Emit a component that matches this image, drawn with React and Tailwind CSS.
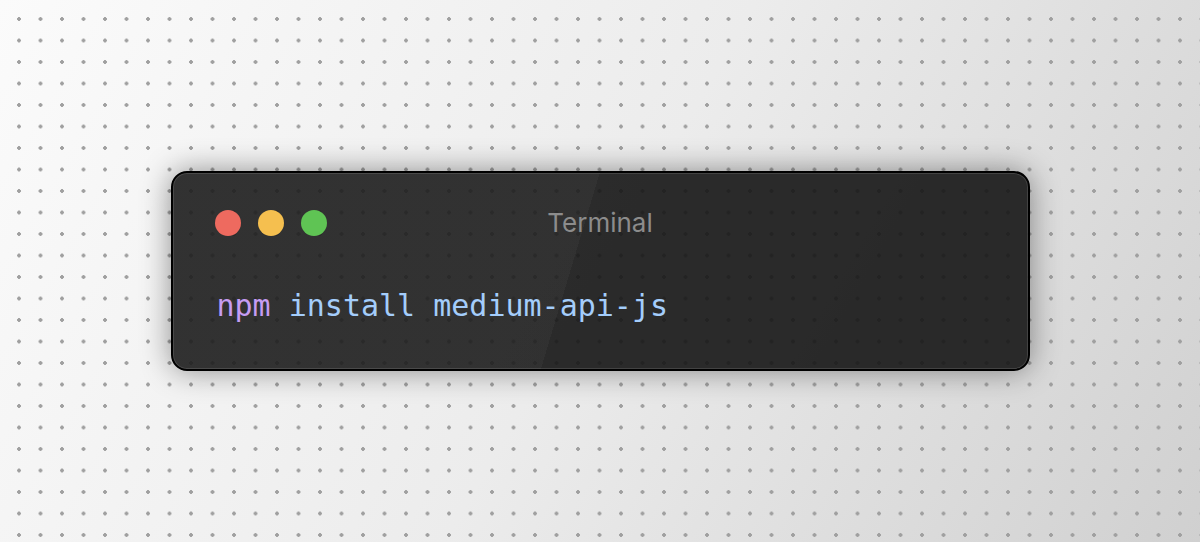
const Dot = ({ color }) => (
  <span className={`block h-[26px] w-[26px] rounded-full ${color}`} />
);

const App = () => {
  return (
    <div className="flex h-[542px] w-full items-center justify-center bg-[radial-gradient(circle,#a0a0a0_1.6px,transparent_2.1px),linear-gradient(120deg,#fbfbfb_0%,#ececec_50%,#d0d0d0_100%)] bg-size-[21.5px_21.5px,100%_100%] bg-position-[8.25px_8.25px,0_0]">
      {/* WINDOW */}
      <div className="h-[200px] w-[859px] rounded-2xl border-2 border-black bg-[rgba(21,21,21,0.9)] bg-[linear-gradient(106.7deg,rgba(255,255,255,0.03)_46.7%,transparent_46.7%)] shadow-[0_0_30px_rgba(0,0,0,0.42),inset_0_0_0_1px_rgba(255,255,255,0.12)]">
        {/* Title bar */}
        <div className="grid grid-cols-[1fr_auto_1fr] items-center px-[42px] pt-[37px]">
          <div className="flex items-center gap-[17px]">
            <Dot color="bg-[#ee6a5f]" />
            <Dot color="bg-[#f5bf4f]" />
            <Dot color="bg-[#5fc454]" />
          </div>
          <span className="font-['Inter','Liberation_Sans',sans-serif] text-[26px] leading-[26px] text-[#8c8c8c]">
            Terminal
          </span>
          <div />
        </div>
        {/* Command */}
        <div className="mt-[55px] pl-[44px] font-['DejaVu_Sans_Mono','Liberation_Mono',monospace] text-[30px] leading-[30px] whitespace-pre">
          <span className="text-[#c69cf3]">npm</span>
          <span className="text-[#a4cdfb]"> install medium-api-js</span>
        </div>
      </div>
    </div>
  );
};

export default App;
